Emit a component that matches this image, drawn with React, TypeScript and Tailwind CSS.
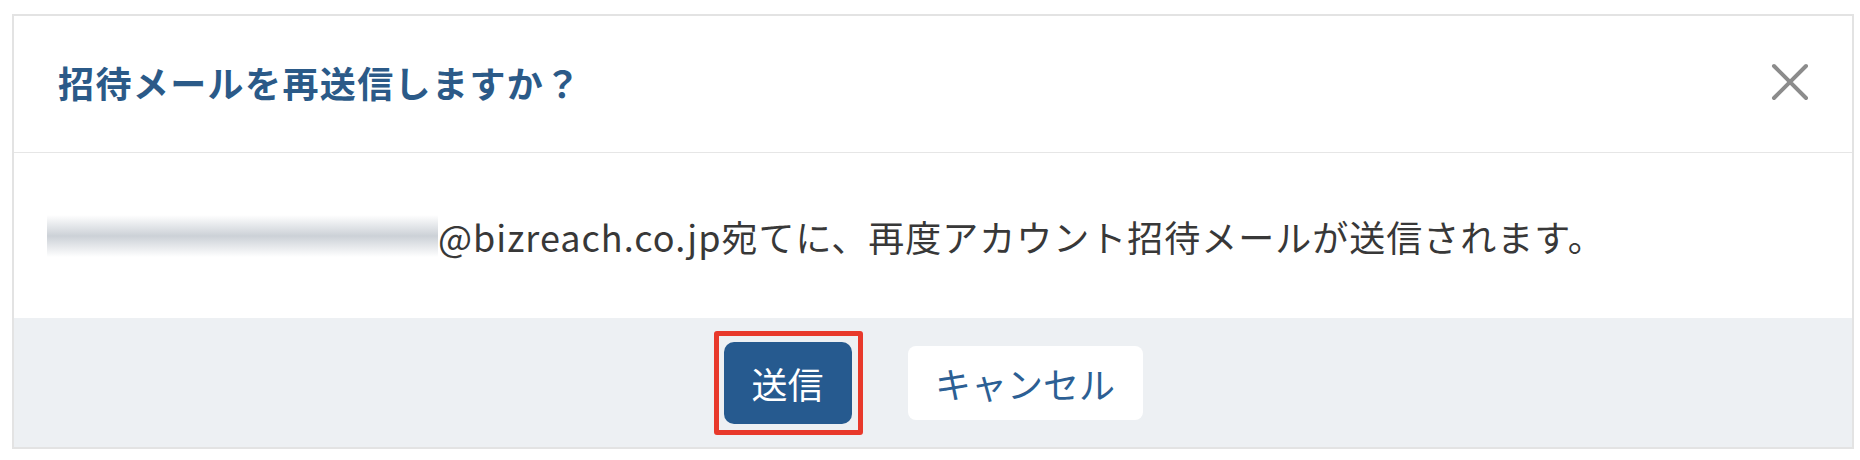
export default function App() {
	return (
		<div className="w-[1860px] h-[460px] bg-white pt-[14px] pl-[12px] font-['Noto_Sans_CJK_JP','Noto_Sans',sans-serif]">
			<div className="w-[1842px] border-2 border-[#e3e3e3] flex flex-col">
				{/* header */}
				<div className="h-[137px] flex items-center justify-between pl-[44px] pr-[43px] pb-[5px] border-b border-[#e6e6e6]">
					<h2 className="text-[36px] leading-none font-bold tracking-[1.4px] text-[#2b5a88]">
						招待メールを再送信しますか？
					</h2>
					<button className="w-[38px] h-[38px] flex items-center justify-center">
						<svg width="38" height="38" viewBox="0 0 38 38">
							<path
								d="M3 3L35 35M35 3L3 35"
								stroke="#8c8c8c"
								strokeWidth="4"
								strokeLinecap="round"
							/>
						</svg>
					</button>
				</div>

				{/* body */}
				<div className="h-[165px] flex items-center pl-[33px]">
					<p className="flex items-center text-[36px] leading-none text-[#383838]">
						<span className="inline-block w-[391px] h-[42px] bg-linear-to-b from-white via-[#ccd1d7] to-white"></span>
						<span className="tracking-[1px]">@bizreach.co.jp宛てに、再度アカウント招待メールが送信されます。</span>
					</p>
				</div>

				{/* footer */}
				<div className="h-[129px] bg-[#edf0f3] flex items-center justify-center gap-[56px]">
					<div className="relative">
						<button className="w-[128px] h-[82px] rounded-[10px] bg-[#265a8f] text-white text-[36px] leading-none flex items-center justify-center">
							送信
						</button>
						<div className="absolute -top-[11px] -bottom-[11px] -left-[10px] -right-[11px] border-[5px] border-[#e8392b] rounded-[3px] pointer-events-none"></div>
					</div>
					<button className="w-[235px] h-[74px] rounded-[8px] bg-white text-[#2c5f94] text-[36px] leading-none flex items-center justify-center">
						キャンセル
					</button>
				</div>
			</div>
		</div>
	);
}
